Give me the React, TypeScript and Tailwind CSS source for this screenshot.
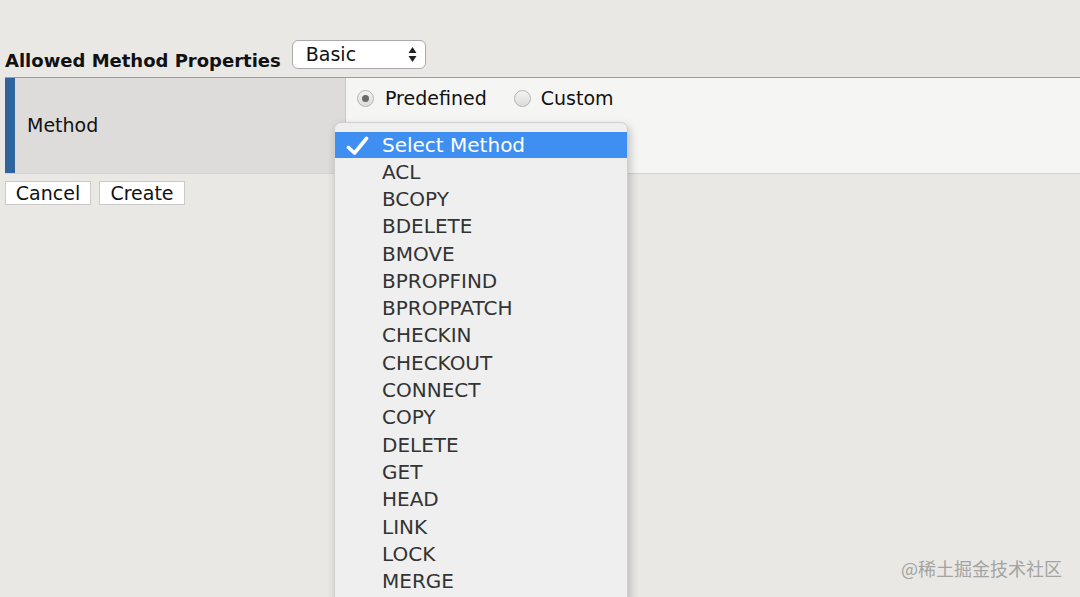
import React from "react";

const methods = [
  "ACL",
  "BCOPY",
  "BDELETE",
  "BMOVE",
  "BPROPFIND",
  "BPROPPATCH",
  "CHECKIN",
  "CHECKOUT",
  "CONNECT",
  "COPY",
  "DELETE",
  "GET",
  "HEAD",
  "LINK",
  "LOCK",
  "MERGE",
];

function Radio({ checked }: { checked?: boolean }) {
  return (
    <span className="w-[17px] h-[17px] rounded-full border border-[#b4b4b4] bg-gradient-to-b from-[#f4f4f4] to-[#dcdcdc] flex items-center justify-center shrink-0">
      {checked && <span className="w-[7px] h-[7px] rounded-full bg-[#6a6a6a]" />}
    </span>
  );
}

export default function App() {
  return (
    <div className="relative w-[1080px] h-[597px] overflow-hidden bg-[#e9e8e5] font-['DejaVu_Sans',sans-serif] text-[#111]">
      {/* header */}
      <div className="flex items-start pt-[40px] pl-[5px] gap-[11px]">
        <div className="mt-[10px] text-[18px] leading-[22px] font-bold text-[#111]">
          Allowed Method Properties
        </div>
        <div className="w-[134px] h-[29px] rounded-[6px] border border-[#a9a9a9] bg-white flex items-center justify-between pl-[13px] pr-[8px] text-[19px] text-[#111]">
          <span>Basic</span>
          <svg width="9" height="17" viewBox="0 0 9 17">
            <path d="M4.5 1 L8.5 7 L0.5 7 Z" fill="#222" />
            <path d="M4.5 16 L8.5 10 L0.5 10 Z" fill="#222" />
          </svg>
        </div>
      </div>

      {/* table row */}
      <div className="mt-[5px] ml-[5px] flex h-[97px] border-t border-[#9d9d9d] border-b border-b-[#d3d2cf]">
        <div className="w-[341px] flex bg-[#dddcda] border-r border-[#c9c9c7]">
          <div className="w-[10px] bg-[#2f659c]" />
          <div className="pl-[12px] self-center text-[19px] text-[#111]">Method</div>
        </div>
        <div className="flex-1 bg-[#f5f5f4] pl-[11px] pt-[9px]">
          <div className="flex items-center h-[22px] text-[19px] text-[#111]">
            <Radio checked />
            <span className="ml-[11px]">Predefined</span>
            <span className="ml-[27px]">
              <Radio />
            </span>
            <span className="ml-[10px]">Custom</span>
          </div>
        </div>
      </div>

      {/* buttons */}
      <div className="flex gap-[8px] mt-[7px] ml-[5px]">
        <button className="w-[86px] h-[24px] bg-white border border-[#cacaca] text-[19px] leading-[22px] text-[#111] flex items-center justify-center">
          Cancel
        </button>
        <button className="w-[86px] h-[24px] bg-white border border-[#cacaca] text-[19px] leading-[22px] text-[#111] flex items-center justify-center">
          Create
        </button>
      </div>

      {/* dropdown menu */}
      <div className="absolute left-[334px] top-[122px] w-[294px] h-[500px] rounded-t-[7px] bg-[#efefef] border border-[#cfcfcf] pt-[9px] shadow-[2px_4px_10px_rgba(0,0,0,0.22)]">
        <div className="relative h-[26px] bg-[#3f8ff2] flex items-center pl-[47px] text-[20px] text-white">
          <svg
            className="absolute left-[11px] top-[4px]"
            width="23"
            height="20"
            viewBox="0 0 23 20"
          >
            <path
              d="M2.5 11.5 L8.5 17 L20.5 2.5"
              fill="none"
              stroke="white"
              strokeWidth="3.6"
              strokeLinecap="round"
              strokeLinejoin="round"
            />
          </svg>
          Select Method
        </div>
        {methods.map((m) => (
          <div
            key={m}
            className="h-[27.3px] flex items-center pl-[47px] text-[20px] text-[#333]"
          >
            {m}
          </div>
        ))}
      </div>

      {/* watermark */}
      <div className="absolute right-[18px] top-[557px] text-[18px] leading-[22px] text-[#a3a3a3] font-['Noto_Sans_CJK_SC',sans-serif]">
        @稀土掘金技术社区
      </div>
    </div>
  );
}
